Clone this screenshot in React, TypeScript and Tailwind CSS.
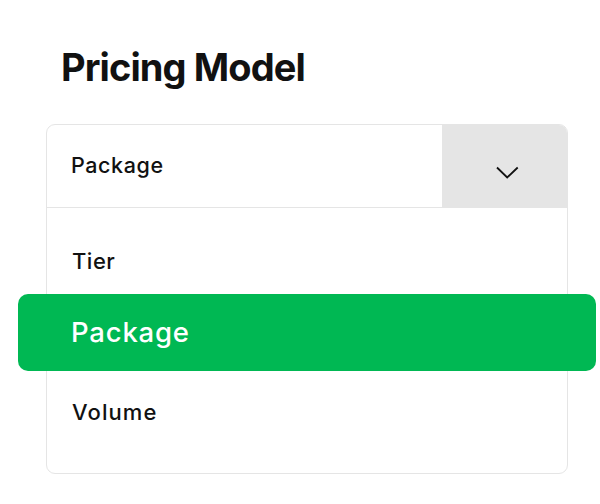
import React from "react";

export default function App() {
  return (
    <div
      className="w-[600px] h-[504px] bg-white overflow-hidden text-[#111111]"
      style={{ fontFamily: "Inter, 'Noto Sans', sans-serif" }}
    >
      <div className="pt-[48px] pl-[61px] text-[38px] leading-[38px] font-bold tracking-[-0.9px]">
        Pricing Model
      </div>
      <div className="mt-[38px] ml-[46px] w-[522px] border border-[#e5e5e5] rounded-[9px]">
        <div className="flex h-[83px] border-b border-[#e5e5e5]">
          <div className="flex-1 flex items-center pl-[24px] text-[21.5px] leading-[21.5px] font-medium tracking-[0.6px]">
            Package
          </div>
          <div className="w-[125px] bg-[#e5e5e5] rounded-tr-[8px] flex items-center pl-[54px]">
            <svg width="23" height="13" viewBox="0 0 23 13" className="mt-[12px]">
              <polyline
                points="1,1.5 11.2,11.5 21.7,1.5"
                fill="none"
                stroke="#111111"
                strokeWidth="1.8"
              />
            </svg>
          </div>
        </div>
        <div className="flex flex-col">
          <div className="mt-[42px] pl-[25px] text-[22px] leading-[22px] font-medium tracking-[0.5px]">Tier</div>
          <div className="mt-[22px] -mx-[29px] h-[77px] rounded-[10px] bg-[#00b853] flex items-center pl-[53px] text-white text-[27.5px] leading-[27.5px] font-medium tracking-[0.8px]">
            Package
          </div>
          <div className="mt-[30px] pl-[25px] text-[22px] leading-[22px] font-medium tracking-[1.1px] pb-[50px]">
            Volume
          </div>
        </div>
      </div>
    </div>
  );
}
